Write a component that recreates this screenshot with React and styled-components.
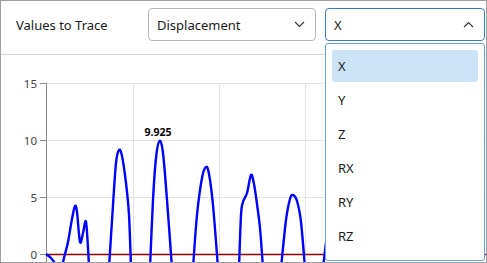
import React from 'react';
import styled, {createGlobalStyle} from 'styled-components';

const GlobalStyle = createGlobalStyle`
  html, body {
    margin: 0;
    padding: 0;
    background: #ffffff;
  }
  body {
    font-family: "Noto Sans", "Open Sans", sans-serif;
    color: #1a1a1a;
  }
`;

const Frame = styled.div`
  position: relative;
  width: 487px;
  height: 263px;
  box-sizing: border-box;
  border: 1px solid #a0a0a0;
  background: #fff;
  overflow: hidden;
  display: flex;
  flex-direction: column;
`;

const Toolbar = styled.div`
  height: 53px;
  flex: none;
  display: flex;
  align-items: center;
  border-bottom: 1px solid #d4d4d4;
  padding-left: 15px;
`;

const Label = styled.div`
  width: 132px;
  font-size: 13px;
  line-height: 18px;
  margin-top: -6px;
`;

const Select = styled.div`
  box-sizing: border-box;
  width: ${p => p.width}px;
  height: 33px;
  margin-top: -6px;
  margin-right: ${p => p.gap || 0}px;
  border: 1px solid ${p => (p.open ? '#3a7cc4' : '#b4b4b4')};
  border-radius: 4px;
  display: flex;
  align-items: center;
  justify-content: space-between;
  padding: 0 10px 0 8px;
  font-size: 13px;
`;

const Chevron = ({up}) => (
  <svg width="11" height="7" viewBox="0 0 11 7">
    <path
      d={up ? 'M1 6 L5.5 1.5 L10 6' : 'M1 1 L5.5 5.5 L10 1'}
      fill="none"
      stroke="#333"
      strokeWidth="1.1"
    />
  </svg>
);

const ChartArea = styled.div`
  flex: 1;
  position: relative;
`;

const Menu = styled.div`
  position: absolute;
  left: 324px;
  top: 42px;
  width: 160px;
  height: 218px;
  box-sizing: border-box;
  border: 1px solid #6aa2da;
  border-radius: 3px;
  background: #fff;
  padding: 6px;
  display: flex;
  flex-direction: column;
  gap: 2px;
`;

const MenuItem = styled.div`
  height: 32px;
  border-radius: 3px;
  display: flex;
  align-items: center;
  padding-left: 6px;
  font-size: 13px;
  background: ${p => (p.active ? '#cce4f7' : 'transparent')};
`;

// chart helpers, coordinates are page pixels
const yOf = v => 254 - v * 11.4;

function spline(pts) {
  let d = `M${pts[0][0]} ${pts[0][1]}`;
  for (let i = 0; i < pts.length - 1; i++) {
    const p0 = pts[i - 1] || pts[i];
    const p1 = pts[i];
    const p2 = pts[i + 1];
    const p3 = pts[i + 2] || p2;
    const c1x = p1[0] + (p2[0] - p0[0]) / 6;
    const c1y = p1[1] + (p2[1] - p0[1]) / 6;
    const c2x = p2[0] - (p3[0] - p1[0]) / 6;
    const c2y = p2[1] - (p3[1] - p1[1]) / 6;
    d += ` C${c1x} ${c1y} ${c2x} ${c2y} ${p2[0]} ${p2[1]}`;
  }
  return d;
}

const segments = [
  [[46, 254], [51, 258], [57, 266]],
  [[62, 266], [65, 254], [68, 242], [72, 219], [75, 206], [77, 212], [80, 242], [83, 233], [85.5, 221], [87, 232], [89, 266]],
  [[109, 268], [113, 205], [116, 163], [119, 150], [122, 156], [126, 183], [129, 215], [131, 268]],
  [[150, 268], [153, 200], [156, 158], [159.5, 141], [163, 153], [167, 200], [172, 268]],
  [[193, 268], [197, 215], [202, 178], [206, 167], [209, 174], [213, 205], [218, 268]],
  [[239, 268], [241, 215], [243, 202], [247, 193], [251, 175], [254, 184], [257, 204], [260, 228], [263, 268]],
  [[281, 268], [286, 220], [290, 199], [293, 195], [297, 201], [301, 222], [305, 268]],
  [[323, 268], [327, 235], [332, 200]],
];

const Chart = () => (
  <svg width="485" height="207" viewBox="1 55 485 207" style={{display: 'block'}}>
    {[15, 10, 5].map(v => (
      <line key={'h' + v} x1="46" x2="487" y1={yOf(v) + 0.5} y2={yOf(v) + 0.5} stroke="#e3e3e3" strokeWidth="1" />
    ))}
    {[133, 219, 305, 391, 477].map(x => (
      <line key={'v' + x} x1={x + 0.5} x2={x + 0.5} y1="83" y2="254" stroke="#e3e3e3" strokeWidth="1" />
    ))}
    <line x1="46.5" x2="46.5" y1="83" y2="262" stroke="#8a8a8a" strokeWidth="1" />
    {[15, 10, 5, 0].map(v => (
      <g key={'t' + v}>
        <line x1="40" x2="46" y1={yOf(v) + 0.5} y2={yOf(v) + 0.5} stroke="#8a8a8a" strokeWidth="1" />
        <text
          x="37"
          y={yOf(v) + 4.5}
          textAnchor="end"
          fontSize="11.5"
          fill="#444"
          fontFamily="Noto Sans, sans-serif"
        >
          {v}
        </text>
      </g>
    ))}
    <line x1="46" x2="487" y1="254.5" y2="254.5" stroke="#900000" strokeWidth="1.5" />
    {segments.map((s, i) => (
      <path key={i} d={spline(s)} fill="none" stroke="#0000ff" strokeWidth="2.4" strokeLinejoin="round" />
    ))}
    <text x="158" y="136" textAnchor="middle" fontSize="10.5" fontWeight="700" fill="#000" fontFamily="Noto Sans, sans-serif">
      9.925
    </text>
  </svg>
);

const options = ['X', 'Y', 'Z', 'RX', 'RY', 'RZ'];

export default function App() {
  return (
    <>
      <GlobalStyle />
      <Frame>
        <Toolbar>
          <Label>Values to Trace</Label>
          <Select width={168} gap={9}>
            <span>Displacement</span>
            <Chevron />
          </Select>
          <Select width={160} open>
            <span>X</span>
            <Chevron up />
          </Select>
        </Toolbar>
        <ChartArea>
          <Chart />
        </ChartArea>
        <Menu>
          {options.map(o => (
            <MenuItem key={o} active={o === 'X'}>
              {o}
            </MenuItem>
          ))}
        </Menu>
      </Frame>
    </>
  );
}
